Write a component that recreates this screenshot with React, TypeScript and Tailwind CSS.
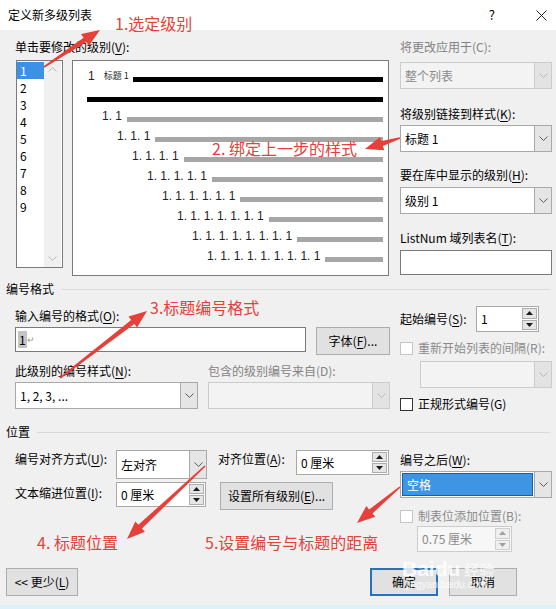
import clsx from "clsx";
import type { ReactNode } from "react";

const RED = "#e5413a";

type Pt = [number, number];

// tapered arrow polygon running from tail to tip
function arrowPoints(tail: Pt, tip: Pt) {
  const dx = tip[0] - tail[0];
  const dy = tip[1] - tail[1];
  const len = Math.hypot(dx, dy);
  const ux = dx / len;
  const uy = dy / len;
  const nx = -uy;
  const ny = ux;
  const headLen = 18;
  const headW = 7;
  const neck: Pt = [tip[0] - ux * headLen, tip[1] - uy * headLen];
  const p = (b: Pt, w: number) => `${b[0] + nx * w},${b[1] + ny * w}`;
  return [
    p(tail, 0.8),
    p(neck, 2.6),
    p(neck, headW),
    `${tip[0]},${tip[1]}`,
    p(neck, -headW),
    p(neck, -2.6),
    p(tail, -0.8),
  ].join(" ");
}

const arrows: [Pt, Pt][] = [
  [[44, 67], [100, 30]],
  [[400, 138], [365, 149]],
  [[60, 378], [147, 311]],
  [[205, 466], [127, 539]],
  [[400, 487], [357, 523]],
];

const Key = ({ children }: { children: ReactNode }) => (
  <span className="underline underline-offset-2">{children}</span>
);

const Chevron = ({ disabled }: { disabled?: boolean }) => (
  <svg width="9" height="5" viewBox="0 0 9 5">
    <polyline
      points="0.5,0.5 4.5,4.5 8.5,0.5"
      fill="none"
      stroke={disabled ? "#b8b8b8" : "#5a5a5a"}
      strokeWidth="1"
    />
  </svg>
);

const Tri = ({ up, disabled }: { up?: boolean; disabled?: boolean }) => (
  <svg width="7" height="4" viewBox="0 0 7 4">
    <polygon
      points={up ? "0,4 3.5,0 7,4" : "0,0 3.5,4 7,0"}
      fill={disabled ? "#a0a0a0" : "#1a1a1a"}
    />
  </svg>
);

function Combo({
  text,
  className,
  disabled,
  selected,
}: {
  text?: string;
  className: string;
  disabled?: boolean;
  selected?: boolean;
}) {
  return (
    <div
      className={clsx(
        "flex border",
        disabled ? "border-[#cccccc] bg-[#f3f3f3]" : "border-[#a9a9a9] bg-white",
        className,
      )}
    >
      <div className={clsx("flex min-w-0 flex-1", selected ? "p-px" : "")}>
        <div
          className={clsx(
            "flex flex-1 items-center pl-[4px]",
            selected && "border border-[#1e5fa0] bg-[#3d95e3] text-white",
            disabled && "text-[#8a8a8a]",
          )}
        >
          {text}
        </div>
      </div>
      <div
        className={clsx(
          "flex w-[17px] items-center justify-center border-l",
          disabled ? "border-[#cccccc] bg-[#e3e3e3]" : "border-[#a9a9a9] bg-[#e5e5e5]",
        )}
      >
        <Chevron disabled={disabled} />
      </div>
    </div>
  );
}

function Spin({
  text,
  className,
  disabled,
}: {
  text: string;
  className: string;
  disabled?: boolean;
}) {
  const btn = clsx(
    "flex flex-1 items-center justify-center border",
    disabled ? "border-[#cfcfcf] bg-[#efefef]" : "border-[#adadad] bg-[#e5e5e5]",
  );
  return (
    <div
      className={clsx(
        "flex border",
        disabled ? "border-[#cccccc] bg-[#f7f7f7] text-[#8a8a8a]" : "border-[#a9a9a9] bg-white",
        className,
      )}
    >
      <div className="flex flex-1 items-center pl-[4px]">{text}</div>
      <div className="flex w-[17px] flex-col gap-px p-px">
        <div className={btn}>
          <Tri up disabled={disabled} />
        </div>
        <div className={btn}>
          <Tri disabled={disabled} />
        </div>
      </div>
    </div>
  );
}

function Button({
  children,
  className,
  primary,
}: {
  children: ReactNode;
  className: string;
  primary?: boolean;
}) {
  return (
    <div
      className={clsx(
        "flex items-center justify-center bg-[#e1e1e1]",
        primary ? "border-2 border-[#2672bd]" : "border border-[#adadad]",
        className,
      )}
    >
      {children}
    </div>
  );
}

function Check({ label, disabled }: { label: ReactNode; disabled?: boolean }) {
  return (
    <div className="flex h-[16px] items-center">
      <div
        className={clsx(
          "h-[13px] w-[13px] border bg-white",
          disabled ? "border-[#c6c6c6]" : "border-[#333333]",
        )}
      />
      <span className={clsx("ml-[5px] leading-[16px]", disabled && "text-[#8a8a8a]")}>
        {label}
      </span>
    </div>
  );
}

const SectionHeader = ({ title }: { title: string }) => (
  <div className="flex h-[16px] items-center pl-[6px] pr-[6px]">
    <span className="leading-[16px]">{title}</span>
    <div className="ml-[7px] h-px flex-1 bg-[#d9d9d9]" />
  </div>
);

const levels = [2, 3, 4, 5, 6, 7, 8, 9];

function Preview() {
  return (
    <div className="ml-[9px] h-[216px] w-[317px] border border-[#7a7a7a] bg-white pt-[6px] pr-[5px] font-['Liberation_Sans',sans-serif] text-[12px] text-[#222]">
      <div className="flex h-[20px] items-end pb-[5px] pl-[15px]">
        <span className="leading-[12px]">1</span>
        <span className="ml-[9px] font-['Noto_Sans_CJK_SC',sans-serif] text-[9px] leading-[12px]">
          标题 1
        </span>
        <div className="ml-[4px] h-[5px] flex-1 bg-black" />
      </div>
      <div className="flex h-[20px] items-end pb-[5px] pl-[14px]">
        <div className="h-[5px] flex-1 bg-black" />
      </div>
      {levels.map((n, i) => (
        <div
          key={n}
          className="flex h-[20px] items-end pb-[5px]"
          style={{ paddingLeft: 29 + i * 15 }}
        >
          <span className="leading-[12px]">{Array(n).fill("1").join(". ")}</span>
          <div className="ml-[5px] h-[5px] flex-1 bg-[#a6a6a6]" />
        </div>
      ))}
    </div>
  );
}

function LevelList() {
  return (
    <div className="ml-[1px] flex h-[208px] w-[47px] border border-[#7a7a7a] bg-white">
      <div className="w-[27px] pt-px">
        {[1, 2, 3, 4, 5, 6, 7, 8, 9].map((n) => (
          <div
            key={n}
            className={clsx(
              "h-[17px] pl-[3px] leading-[17px]",
              n === 1 && "bg-[#3c91e6] text-white",
            )}
          >
            {n}
          </div>
        ))}
      </div>
      <div className="flex w-[17px] flex-col justify-between bg-[#f0f0f0]">
        <div className="flex h-[17px] items-center justify-center rotate-180">
          <Chevron disabled />
        </div>
        <div className="flex h-[17px] items-center justify-center">
          <Chevron disabled />
        </div>
      </div>
    </div>
  );
}

export default function App() {
  return (
    <div className="relative flex h-[609px] w-[556px] flex-col overflow-hidden bg-[#f0f0f0] font-['Noto_Sans_CJK_SC',sans-serif] text-[12px] text-black">
      {/* title bar */}
      <div className="flex h-[30px] shrink-0 items-center bg-white pl-[8px]">
        <span>定义新多级列表</span>
        <span className="ml-auto text-[13px]">?</span>
        <svg className="ml-[41px] mr-[9px]" width="11" height="11" viewBox="0 0 11 11">
          <path d="M0.5 0.5L10.5 10.5M10.5 0.5L0.5 10.5" stroke="#222" strokeWidth="1" />
        </svg>
      </div>

      {/* level picker, preview and style links */}
      <div className="flex pl-[15px] pt-[9px]">
        <div className="w-[375px]">
          <div className="leading-[16px]">
            单击要修改的级别(<Key>V</Key>):
          </div>
          <div className="mt-[5px] flex items-start">
            <LevelList />
            <Preview />
          </div>
        </div>
        <div className="ml-[10px] w-[152px]">
          <div className="leading-[16px] text-[#838383]">将更改应用于(C):</div>
          <Combo className="mt-[7px] h-[27px]" text="整个列表" disabled />
          <div className="mt-[17px] leading-[16px]">
            将级别链接到样式(<Key>K</Key>):
          </div>
          <Combo className="mt-[3px] h-[27px]" text="标题 1" />
          <div className="mt-[15px] leading-[16px]">
            要在库中显示的级别(<Key>H</Key>):
          </div>
          <Combo className="mt-[4px] h-[27px]" text="级别 1" />
          <div className="mt-[16px] leading-[16px]">
            ListNum 域列表名(<Key>T</Key>):
          </div>
          <div className="mt-[4px] h-[25px] border border-[#7a7a7a] bg-white" />
        </div>
      </div>

      {/* numbering format */}
      <div className="mt-[5px]">
        <SectionHeader title="编号格式" />
        <div className="flex pl-[15px]">
          <div className="w-[375px]">
            <div className="mt-[11px] leading-[16px]">
              输入编号的格式(<Key>O</Key>):
            </div>
            <div className="mt-[3px] flex items-start">
              <div className="flex h-[25px] w-[291px] items-center border border-[#7a7a7a] bg-white pl-[2px]">
                <span className="bg-[#c4c4c4] px-px leading-[17px]">1</span>
                <span className="text-[9px] text-[#9a9a9a]">↵</span>
              </div>
              <Button className="ml-[10px] h-[28px] w-[74px]">
                字体(<Key>F</Key>)...
              </Button>
            </div>
            <div className="mt-[8px] flex">
              <div className="w-[183px]">
                <div className="leading-[16px]">
                  此级别的编号样式(<Key>N</Key>):
                </div>
                <Combo className="mt-[3px] h-[27px]" text="1, 2, 3, ..." />
              </div>
              <div className="ml-[10px] w-[182px]">
                <div className="leading-[16px] text-[#838383]">包含的级别编号来自(D):</div>
                <Combo className="mt-[3px] h-[27px]" disabled />
              </div>
            </div>
          </div>
          <div className="ml-[10px] w-[152px]">
            <div className="mt-[9px] flex items-center">
              <span className="w-[76px] leading-[16px]">
                起始编号(<Key>S</Key>):
              </span>
              <Spin className="h-[26px] w-[63px]" text="1" />
            </div>
            <div className="mt-[8px]">
              <Check label="重新开始列表的间隔(R):" disabled />
            </div>
            <Combo className="ml-[20px] mt-[5px] h-[27px] w-[132px]" disabled />
            <div className="mt-[8px]">
              <Check label="正规形式编号(G)" />
            </div>
          </div>
        </div>
      </div>

      {/* position */}
      <div className="mt-[12px]">
        <SectionHeader title="位置" />
        <div className="flex pl-[15px]">
          <div className="w-[192px]">
            <div className="mt-[10px] flex items-start">
              <span className="mt-[1px] w-[101px] leading-[16px]">
                编号对齐方式(<Key>U</Key>):
              </span>
              <Combo className="h-[29px] w-[91px]" text="左对齐" />
            </div>
            <div className="mt-[3px] flex items-start">
              <span className="mt-[3px] w-[101px] leading-[16px]">
                文本缩进位置(<Key>I</Key>):
              </span>
              <Spin className="h-[25px] w-[90px]" text="0 厘米" />
            </div>
          </div>
          <div className="ml-[11px] w-[171px]">
            <div className="mt-[10px] flex items-start">
              <span className="mt-[1px] w-[78px] leading-[16px]">
                对齐位置(<Key>A</Key>):
              </span>
              <Spin className="h-[25px] w-[93px]" text="0 厘米" />
            </div>
            <Button className="ml-[2px] mt-[7px] h-[28px] w-[113px]">
              设置所有级别(<Key>E</Key>)...
            </Button>
          </div>
          <div className="ml-[11px] w-[152px]">
            <div className="mt-[12px] leading-[16px]">
              编号之后(<Key>W</Key>):
            </div>
            <Combo className="mt-[3px] h-[27px]" text="空格" selected />
            <div className="mt-[10px]">
              <Check label="制表位添加位置(B):" disabled />
            </div>
            <Spin className="ml-[17px] mt-[2px] h-[26px] w-[95px]" text="0.75 厘米" disabled />
          </div>
        </div>
      </div>

      {/* dialog buttons */}
      <div className="mt-[16px] flex pl-[6px] pr-[39px]">
        <Button className="h-[28px] w-[72px]">
          &lt;&lt; 更少(<Key>L</Key>)
        </Button>
        <Button className="ml-auto h-[28px] w-[68px]" primary>
          确定
        </Button>
        <Button className="ml-[11px] h-[28px] w-[68px]">取消</Button>
      </div>
      <div className="mt-auto h-[4px] bg-[#dcf1fa]" />

      {/* watermark */}
      <div className="pointer-events-none absolute left-[402px] top-[558px] text-white/80">
        <div className="flex items-end leading-[22px]">
          <span className="font-['Liberation_Sans',sans-serif] text-[21px] font-bold">Baidu</span>
          <span className="ml-[4px] text-[15px] leading-[20px]">经验</span>
        </div>
        <div className="ml-[4px] font-['Liberation_Sans',sans-serif] text-[10px] leading-[10px]">
          jingyan.baidu.com
        </div>
      </div>

      {/* red notes */}
      <svg className="pointer-events-none absolute left-0 top-0" width="556" height="609">
        {arrows.map(([a, b], i) => (
          <polygon key={i} points={arrowPoints(a, b)} fill={RED} />
        ))}
      </svg>
      <div className="pointer-events-none absolute left-[115px] top-[13px] text-[16px] leading-[20px] text-[#e5413a]">
        1.选定级别
      </div>
      <div className="pointer-events-none absolute left-[212px] top-[138px] text-[16px] leading-[20px] text-[#e5413a]">
        2. 绑定上一步的样式
      </div>
      <div className="pointer-events-none absolute left-[150px] top-[297px] text-[16px] leading-[20px] text-[#e5413a]">
        3.标题编号格式
      </div>
      <div className="pointer-events-none absolute left-[37px] top-[532px] text-[16px] leading-[20px] text-[#e5413a]">
        4. 标题位置
      </div>
      <div className="pointer-events-none absolute left-[205px] top-[532px] text-[16px] leading-[20px] text-[#e5413a]">
        5.设置编号与标题的距离
      </div>
    </div>
  );
}
